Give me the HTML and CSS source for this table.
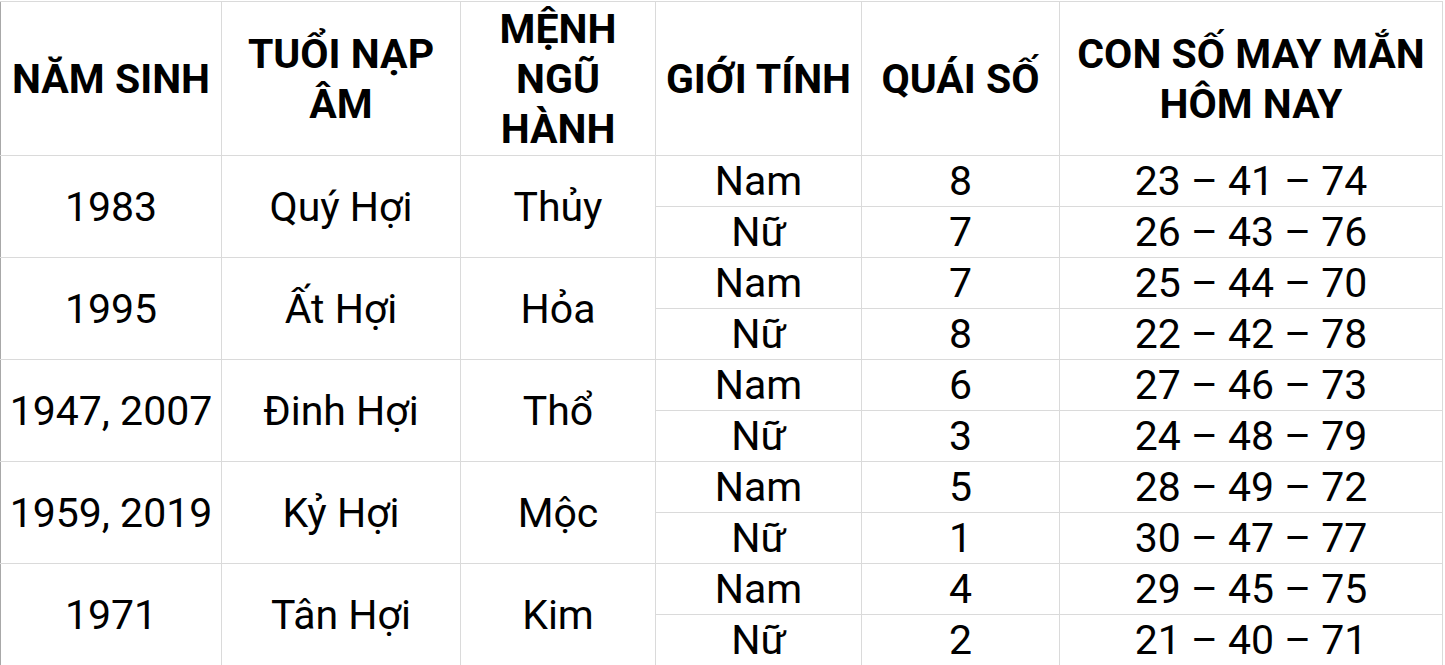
FILE: index.html
```html
<!DOCTYPE html>
<html lang="vi">
<head>
<meta charset="utf-8">
<title>Con số may mắn</title>
<link rel="stylesheet" href="styles.css">
</head>
<body>
<table class="grid">
  <colgroup>
    <col class="c1"><col class="c2"><col class="c3"><col class="c4"><col class="c5"><col class="c6">
  </colgroup>
  <thead>
    <tr class="head">
      <th>NĂM SINH</th>
      <th>TUỔI NẠP<br>ÂM</th>
      <th>MỆNH<br>NGŨ<br>HÀNH</th>
      <th>GIỚI TÍNH</th>
      <th>QUÁI SỐ</th>
      <th>CON SỐ MAY MẮN<br>HÔM NAY</th>
    </tr>
  </thead>
  <tbody>
    <tr><td rowspan="2">1983</td><td rowspan="2">Quý Hợi</td><td rowspan="2">Thủy</td><td>Nam</td><td>8</td><td>23 – 41 – 74</td></tr>
    <tr><td>Nữ</td><td>7</td><td>26 – 43 – 76</td></tr>
    <tr><td rowspan="2">1995</td><td rowspan="2">Ất Hợi</td><td rowspan="2">Hỏa</td><td>Nam</td><td>7</td><td>25 – 44 – 70</td></tr>
    <tr><td>Nữ</td><td>8</td><td>22 – 42 – 78</td></tr>
    <tr><td rowspan="2">1947, 2007</td><td rowspan="2">Đinh Hợi</td><td rowspan="2">Thổ</td><td>Nam</td><td>6</td><td>27 – 46 – 73</td></tr>
    <tr><td>Nữ</td><td>3</td><td>24 – 48 – 79</td></tr>
    <tr><td rowspan="2">1959, 2019</td><td rowspan="2">Kỷ Hợi</td><td rowspan="2">Mộc</td><td>Nam</td><td>5</td><td>28 – 49 – 72</td></tr>
    <tr><td>Nữ</td><td>1</td><td>30 – 47 – 77</td></tr>
    <tr><td rowspan="2">1971</td><td rowspan="2">Tân Hợi</td><td rowspan="2">Kim</td><td>Nam</td><td>4</td><td>29 – 45 – 75</td></tr>
    <tr><td>Nữ</td><td>2</td><td>21 – 40 – 71</td></tr>
  </tbody>
</table>
</body>
</html>
```

FILE: styles.css
```css
html, body {
  margin: 0;
  padding: 0;
  background: #ffffff;
}
body {
  padding-top: 1px;
  font-family: Roboto, "Noto Sans", sans-serif;
  color: #000;
}
.grid {
  border-collapse: collapse;
  table-layout: fixed;
  width: 1442px;
}
.c1 { width: 221px; }
.c2 { width: 239px; }
.c3 { width: 195px; }
.c4 { width: 206px; }
.c5 { width: 198px; }
.c6 { width: 383px; }
.grid th, .grid td {
  border: 1px solid #dadada;
  padding: 0;
  text-align: center;
  vertical-align: middle;
  white-space: nowrap;
}
.grid tr > :first-child {
  border-left-color: #a8a8a8;
}
.head th {
  height: 153px;
  font-size: 41px;
  font-weight: 700;
  line-height: 50px;
}
.grid td {
  height: 50px;
  font-size: 41px;
  font-weight: 400;
  line-height: 50px;
}
```
